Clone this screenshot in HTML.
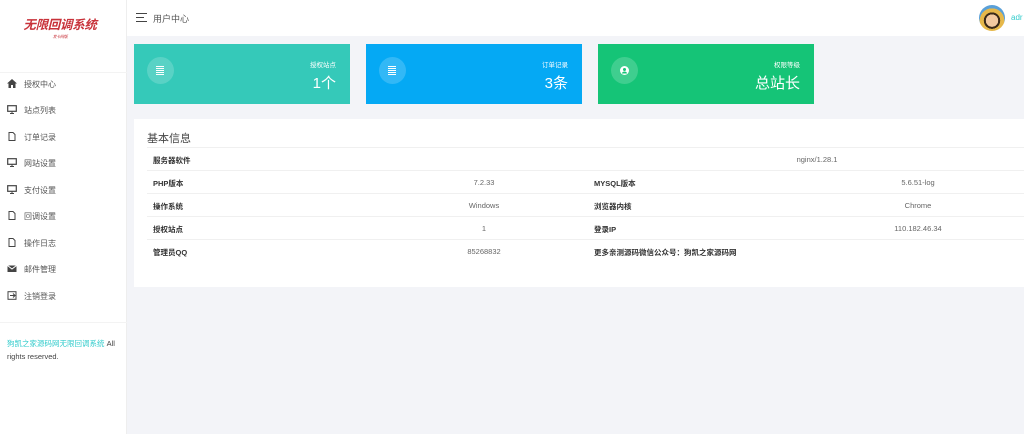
<!DOCTYPE html>
<html><head><meta charset="utf-8"><style>
*{margin:0;padding:0;box-sizing:border-box}
body{width:1024px;height:434px;overflow:hidden;background:#f3f4f8;font-family:"Liberation Sans","Noto Sans CJK SC",sans-serif;position:relative;color:#333}
.side{position:absolute;left:0;top:0;width:127px;height:434px;background:#fff;border-right:1px solid #eee}
.logo{position:absolute;left:23px;top:18px;width:74px;font-size:12.5px;line-height:14px;font-weight:bold;color:#c8323a;font-style:italic;letter-spacing:-0.3px;text-align:center}
.logo small{display:block;font-size:4px;line-height:6px;color:#c8323a;text-align:center;font-weight:normal;margin-top:2px}
.sep{position:absolute;left:0;width:127px;border-top:1px solid #f3f3f3}
.mi{position:absolute;left:7px;font-size:8px;color:#555;height:12px;line-height:12px}
.mi i{display:inline-block;width:10px;height:9px;vertical-align:middle;margin-right:7px;position:relative;top:-1px}
.foot{position:absolute;left:7px;top:337px;width:115px;font-size:7.5px;line-height:13px;color:#444}
.foot span{color:#3cc}
.head{position:absolute;left:127px;top:0;right:0;height:36px;background:#fff}
.ham{position:absolute;left:9px;top:13px;width:11px}
.ham b{display:block;height:1.3px;background:#444;margin-bottom:2.5px}
.ham b:nth-child(2){width:8px}
.head .t{position:absolute;left:26px;top:12px;font-size:9px;color:#555}
.av{position:absolute;left:979px;top:5px;width:26px;height:26px;border-radius:50%;background:radial-gradient(circle at 50% 60%,#f2c9a0 0 30%,#3a2a1a 31% 40%,#e6b84a 41% 60%,#5aa0d8 61%)}
.adm{position:absolute;left:1011px;top:13px;font-size:8px;color:#3cc}
.card{position:absolute;top:44px;width:216px;height:60px;color:#fff}
.card .c{position:absolute;left:13px;top:13px;width:27px;height:27px;border-radius:50%;background:rgba(255,255,255,.18)}
.card .l{position:absolute;right:14px;top:15px;font-size:6.5px}
.card .v{position:absolute;right:14px;top:28px;font-size:15px}
.panel{position:absolute;left:134px;top:119px;width:890px;height:168px;background:#fff}
.pt{position:absolute;left:13px;top:11px;font-size:11px;color:#444}
.ln{position:absolute;left:13px;right:0;border-top:1px solid #f0f0f0}
.td{position:absolute;font-size:7.5px;color:#333}
.b{font-weight:bold;left:19px}
.c1{left:300px;width:100px;text-align:center;color:#666}
.b2{font-weight:bold;left:460px}
.c2{left:734px;width:100px;text-align:center;color:#666}
</style></head><body>
<div class="side">
<div class="logo">无限回调系统<small>发卡网版</small></div>
<div class="sep" style="top:72px"></div>
<div class="mi" style="top:79px"><i><svg width="10" height="9" viewBox="0 0 10 9"><path d="M5 0L0 4.5h1.5V9h2.5V6h2v3h2.5V4.5H10z" fill="#444"/></svg></i>授权中心</div>
<div class="mi" style="top:105px"><i><svg width="10" height="9"><rect x=".7" y=".7" width="8.6" height="5.6" fill="none" stroke="#444" stroke-width="1.2"/><path d="M3 8.5h4M5 6.5v2" stroke="#444"/></svg></i>站点列表</div>
<div class="mi" style="top:132px"><i><svg width="10" height="9"><path d="M2 .5h4l2 2v6H2z" fill="none" stroke="#444"/></svg></i>订单记录</div>
<div class="mi" style="top:158px"><i><svg width="10" height="9"><rect x=".7" y=".7" width="8.6" height="5.6" fill="none" stroke="#444" stroke-width="1.2"/><path d="M3 8.5h4M5 6.5v2" stroke="#444"/></svg></i>网站设置</div>
<div class="mi" style="top:185px"><i><svg width="10" height="9"><rect x=".7" y=".7" width="8.6" height="5.6" fill="none" stroke="#444" stroke-width="1.2"/><path d="M3 8.5h4M5 6.5v2" stroke="#444"/></svg></i>支付设置</div>
<div class="mi" style="top:211px"><i><svg width="10" height="9"><path d="M2 .5h4l2 2v6H2z" fill="none" stroke="#444"/></svg></i>回调设置</div>
<div class="mi" style="top:238px"><i><svg width="10" height="9"><path d="M2 .5h4l2 2v6H2z" fill="none" stroke="#444"/></svg></i>操作日志</div>
<div class="mi" style="top:264px"><i><svg width="10" height="9"><rect x=".5" y="1.5" width="9" height="6.5" fill="#444"/><path d="M.5 1.5l4.5 3.5 4.5-3.5" stroke="#fff" fill="none"/></svg></i>邮件管理</div>
<div class="mi" style="top:291px"><i><svg width="10" height="9"><rect x="1" y=".7" width="8" height="7.6" fill="none" stroke="#444"/><path d="M3 4.5h5M6 2.5l2 2-2 2" stroke="#444" fill="none"/></svg></i>注销登录</div>
<div class="sep" style="top:322px"></div>
<div class="foot"><span>狗凯之家源码网无限回调系统</span> All rights reserved.</div>
</div>
<div class="head"><div class="ham"><b></b><b></b><b></b></div><div class="t">用户中心</div></div>
<div class="av"></div><div class="adm">adr</div>
<div class="card" style="left:134px;background:#35c9b9"><div class="c"></div><div class="l">授权站点</div><div class="v">1个</div></div>
<div class="card" style="left:366px;background:#05a9f4"><div class="c"></div><div class="l">订单记录</div><div class="v">3条</div></div>
<div class="card" style="left:598px;background:#15c477"><div class="c"></div><div class="l">权限等级</div><div class="v">总站长</div></div>
<svg style="position:absolute;left:156px;top:66px" width="8" height="9"><path d="M0 .5h8M0 2.5h8M0 4.5h8M0 6.5h8M0 8.5h8" stroke="#fff" stroke-width="0.9"/></svg>
<svg style="position:absolute;left:388px;top:66px" width="8" height="9"><path d="M0 .5h8M0 2.5h8M0 4.5h8M0 6.5h8M0 8.5h8" stroke="#fff" stroke-width="0.9"/></svg>
<svg style="position:absolute;left:620px;top:66px" width="9" height="9"><circle cx="4.5" cy="4.5" r="4.5" fill="#fff"/><circle cx="4.5" cy="3.5" r="1.5" fill="#15c477"/><path d="M2 7.5a2.5 2 0 0 1 5 0z" fill="#15c477"/></svg>
<div class="panel">
<div class="pt">基本信息</div>
<div class="ln" style="top:28px"></div><div class="ln" style="top:51px"></div><div class="ln" style="top:74px"></div><div class="ln" style="top:97px"></div><div class="ln" style="top:120px"></div>
<div class="td b" style="top:36px">服务器软件</div><div class="td" style="left:633px;top:36px;width:100px;text-align:center;color:#666">nginx/1.28.1</div>
<div class="td b" style="top:59px">PHP版本</div><div class="td c1" style="top:59px">7.2.33</div><div class="td b2" style="top:59px">MYSQL版本</div><div class="td c2" style="top:59px">5.6.51-log</div>
<div class="td b" style="top:82px">操作系统</div><div class="td c1" style="top:82px">Windows</div><div class="td b2" style="top:82px">浏览器内核</div><div class="td c2" style="top:82px">Chrome</div>
<div class="td b" style="top:105px">授权站点</div><div class="td c1" style="top:105px">1</div><div class="td b2" style="top:105px">登录IP</div><div class="td c2" style="top:105px">110.182.46.34</div>
<div class="td b" style="top:128px">管理员QQ</div><div class="td c1" style="top:128px">85268832</div><div class="td b2" style="top:128px">更多亲测源码微信公众号：狗凯之家源码网</div>
</div>
</body></html>
